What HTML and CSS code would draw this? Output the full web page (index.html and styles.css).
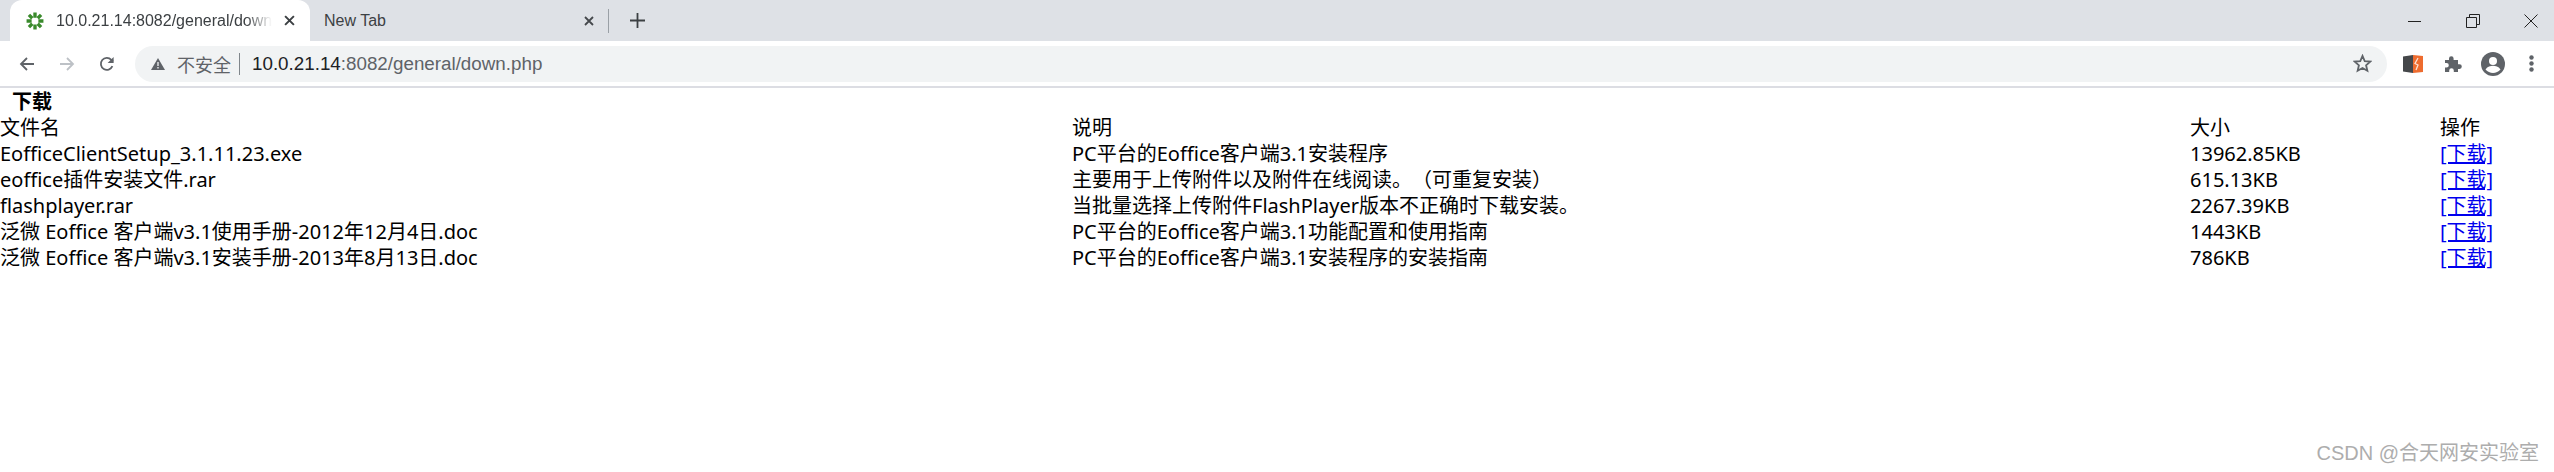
FILE: index.html
```html
<!DOCTYPE html>
<html>
<head>
    <title>10.0.21.14:8082/general/down.php</title>
    <link rel="stylesheet" href="styles.css">
</head>
<body>
    <!-- Tab strip -->
    <div class="tabstrip">
        <div class="tab tab-active">
            <svg class="favicon" viewBox="0 0 16 16" width="18" height="18">
                <g stroke="#3a8a2c" stroke-width="3" fill="none">
                    <path d="M8 .5v4.500M8 11v4.500M.5 8H5M11 8h4.500"/>
                    <path d="M2.600 2.600l3 3M10.400 10.400l3 3M13.400 2.600l-3 3M5.600 10.400l-3 3"/>
                </g>
            </svg>
            <span class="tab-title tab-fade">10.0.21.14:8082/general/down.php</span>
            <svg class="tab-close" viewBox="0 0 10 10" width="11" height="11"><path d="M1 1l8 8M9 1l-8 8" stroke="#3c4043" stroke-width="1.800"/></svg>
        </div>
        <div class="tab tab-new">
            <span class="tab-title">New Tab</span>
            <svg class="tab-close" viewBox="0 0 10 10" width="10" height="10"><path d="M1 1l8 8M9 1l-8 8" stroke="#45484c" stroke-width="1.800"/></svg>
        </div>
        <div class="tab-sep"></div>
        <svg class="new-tab" viewBox="0 0 15 15" width="15" height="15"><path d="M7.500 0v15M0 7.500h15" stroke="#3c4043" stroke-width="1.800"/></svg>
        <div class="win-btns">
            <svg viewBox="0 0 14 14" width="14" height="14"><path d="M0 7.500h13" stroke="#222" stroke-width="1"/></svg>
            <svg viewBox="0 0 14 14" width="14" height="14"><path d="M3.500 3V.5h10v10H11M.5 3.500h10v10H.5z" fill="none" stroke="#222" stroke-width="1"/></svg>
            <svg viewBox="0 0 14 14" width="14" height="14"><path d="M.5.5l13 13M13.500.5l-13 13" stroke="#222" stroke-width="1"/></svg>
        </div>
    </div>

    <!-- Toolbar -->
    <div class="toolbar">
        <svg class="nav-icon" viewBox="0 0 16 16" width="16" height="16"><path d="M15 8H2M8 2L2 8l6 6" fill="none" stroke="#5f6368" stroke-width="1.800"/></svg>
        <svg class="nav-icon" viewBox="0 0 16 16" width="16" height="16"><path d="M1 8h13M8 2l6 6-6 6" fill="none" stroke="#bdc1c6" stroke-width="1.800"/></svg>
        <svg class="nav-icon" viewBox="0 0 16 16" width="16" height="16"><path d="M13.400 10.200A6 6 0 1 1 12.300 3.800L14 5.500" fill="none" stroke="#5f6368" stroke-width="1.800"/><path d="M14.600 1v6h-6z" fill="#5f6368"/></svg>
        <div class="omnibox">
            <svg class="warn" viewBox="0 0 14 12" width="14" height="12"><path d="M7 0l7 12H0z" fill="#5f6368"/><path d="M7 4v4M7 9v1.600" stroke="#f1f3f4" stroke-width="1.300"/></svg>
            <span class="not-secure">不安全</span>
            <span class="omni-sep"></span>
            <span class="url"><span class="url-host">10.0.21.14</span>:8082/general/down.php</span>
            <svg class="star" viewBox="0 0 18 18" width="19" height="19"><path d="M9 1.800l2.100 4.900 5.300.5-4 3.500 1.200 5.200L9 13.200l-4.600 2.700 1.200-5.200-4-3.500 5.300-.5z" fill="none" stroke="#5f6368" stroke-width="1.700"/></svg>
        </div>
        <svg class="ext ext-first" viewBox="0 0 20 18" width="20" height="18"><path d="M0 1.500L10 0v18L0 16.500z" fill="#45474a"/><path d="M10 0l10 1v16l-10 1z" fill="#ee6c2f"/><path d="M15 3l-3 5.500 3 1.500-2 5" fill="none" stroke="#fde3d4" stroke-width="1.300"/></svg>
        <svg class="ext ext-puzzle" viewBox="0 0 18 18" width="18" height="18"><path d="M1 5h4V3.500a2.300 2.300 0 0 1 4.600 0V5H14v4.300h1.500a2.300 2.300 0 0 1 0 4.600H14V17H9.800v-1.500a2.300 2.300 0 0 0-4.600 0V17H1v-4.500h1.500a2.300 2.300 0 0 0 0-4.600H1z" fill="#5f6368"/></svg>
        <svg class="ext ext-avatar" viewBox="0 0 24 24" width="24" height="24"><circle cx="12" cy="12" r="12" fill="#5f6368"/><circle cx="12" cy="9" r="4" fill="#fff"/><path d="M4.500 17.500c2-3 5-3.700 7.500-3.700s5.500.7 7.500 3.700c-2 2.300-4.700 3.500-7.500 3.500s-5.500-1.200-7.500-3.500z" fill="#fff"/></svg>
        <svg class="ext ext-menu" viewBox="0 0 5 17" width="5" height="17"><g fill="#5f6368"><circle cx="2.500" cy="2.500" r="2.200"/><circle cx="2.500" cy="8.500" r="2.200"/><circle cx="2.500" cy="14.500" r="2.200"/></g></svg>
    </div>

    <!-- Page content -->
    <div class="page">
        <div class="title">下载</div>
        <table class="files">
            <tr>
                <td class="col-name">文件名</td>
                <td class="col-desc">说明</td>
                <td class="col-size">大小</td>
                <td>操作</td>
            </tr>
            <tr>
                <td>EofficeClientSetup_3.1.11.23.exe</td>
                <td>PC平台的Eoffice客户端3.1安装程序</td>
                <td>13962.85KB</td>
                <td><a href="#">[下载]</a></td>
            </tr>
            <tr>
                <td>eoffice插件安装文件.rar</td>
                <td>主要用于上传附件以及附件在线阅读。（可重复安装）</td>
                <td>615.13KB</td>
                <td><a href="#">[下载]</a></td>
            </tr>
            <tr>
                <td>flashplayer.rar</td>
                <td>当批量选择上传附件FlashPlayer版本不正确时下载安装。</td>
                <td>2267.39KB</td>
                <td><a href="#">[下载]</a></td>
            </tr>
            <tr>
                <td>泛微 Eoffice 客户端v3.1使用手册-2012年12月4日.doc</td>
                <td>PC平台的Eoffice客户端3.1功能配置和使用指南</td>
                <td>1443KB</td>
                <td><a href="#">[下载]</a></td>
            </tr>
            <tr>
                <td>泛微 Eoffice 客户端v3.1安装手册-2013年8月13日.doc</td>
                <td>PC平台的Eoffice客户端3.1安装程序的安装指南</td>
                <td>786KB</td>
                <td><a href="#">[下载]</a></td>
            </tr>
        </table>
        <div class="watermark">CSDN @合天网安实验室</div>
    </div>
</body>
</html>
```

FILE: styles.css
```css
* {
  padding: 0;
  margin: 0;
  box-sizing: border-box;
}

body {
  font-family: "Noto Sans", "Noto Sans CJK SC", sans-serif;
  background: #fff;
  width: 2554px;
  height: 472px;
  overflow: hidden;
}

/* Tab strip */
.tabstrip {
  height: 41px;
  background: #dee1e6;
  display: flex;
  align-items: center;
  padding-left: 10px;
}

.tab {
  height: 41px;
  display: flex;
  align-items: center;
  font-family: "Liberation Sans", "Noto Sans CJK SC", sans-serif;
  font-size: 16px;
  color: #3c4043;
}

.tab-active {
  width: 300px;
  background: #fff;
  border-radius: 12px 12px 0 0;
  padding: 0 15px 0 16px;
}

.tab-new {
  width: 284px;
  padding-left: 14px;
}

.favicon {
  flex: none;
  margin-right: 12px;
}

.tab-title {
  flex: 1;
  overflow: hidden;
  white-space: nowrap;
  margin-right: 12px;
}

.tab-fade {
  -webkit-mask-image: linear-gradient(to right, #000 88%, transparent);
  mask-image: linear-gradient(to right, #000 88%, transparent);
}

.tab-close {
  flex: none;
}

.tab-sep {
  width: 1px;
  height: 24px;
  background: #9aa0a6;
  margin-left: 14px;
}

.new-tab {
  margin-left: 21px;
}

.win-btns {
  margin-left: auto;
  display: flex;
  gap: 44px;
  padding-right: 16px;
}

/* Toolbar */
.toolbar {
  height: 45px;
  background: #fff;
  display: flex;
  align-items: center;
  padding-left: 19px;
  gap: 24px;
}

.nav-icon {
  flex: none;
}

.omnibox {
  margin-left: -4px;
  width: 2252px;
  height: 36px;
  background: #f1f3f4;
  border-radius: 18px;
  display: flex;
  align-items: center;
  padding: 0 15px 0 16px;
  font-family: "Liberation Sans", "Noto Sans CJK SC", sans-serif;
  color: #5f6368;
}

.warn {
  margin-right: 12px;
}

.not-secure {
  font-size: 18px;
}

.omni-sep {
  width: 1px;
  height: 22px;
  background: #80868b;
  margin: 0 12px 0 8px;
}

.url {
  font-size: 18.8px;
}

.url-host {
  color: #202124;
}

.star {
  margin-left: auto;
}

.ext {
  flex: none;
}

.ext-first {
  margin-left: -8px;
}

.ext-puzzle {
  margin-left: -3px;
}

.ext-avatar {
  margin-left: -5px;
}

/* Page content */
.page {
  border-top: 2px solid #dcdde3;
  padding-top: 1px;
  position: relative;
  height: 386px;
  font-size: 20px;
  line-height: 26px;
  color: #000;
}

.title {
  font-weight: bold;
  padding-left: 12px;
}

.files {
  border-collapse: collapse;
  table-layout: fixed;
  width: 2554px;
  text-spacing-trim: space-all;
}

.files td {
  padding: 0;
  white-space: nowrap;
  height: 26px;
}

.col-name {
  width: 1072px;
}

.col-desc {
  width: 1118px;
}

.col-size {
  width: 250px;
}

.files a {
  color: #0000ee;
}

.watermark {
  position: absolute;
  right: 15px;
  bottom: 6px;
  font-family: "Liberation Sans", "Noto Sans CJK SC", sans-serif;
  font-size: 20px;
  color: #adadad;
}
```
